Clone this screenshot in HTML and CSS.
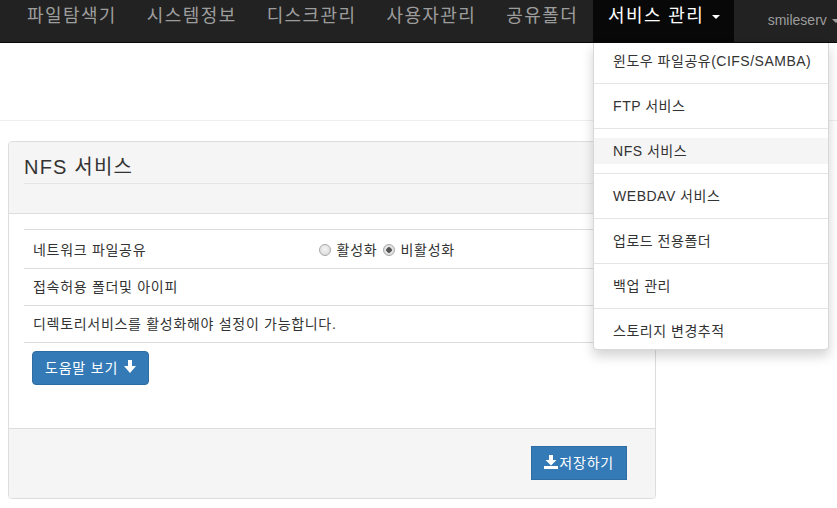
FILE: index.html
```html
<!DOCTYPE html>
<html lang="ko">
<head>
    <meta charset="UTF-8">
    <meta name="viewport" content="width=device-width, initial-scale=1.0">
    <title>NFS 서비스</title>
    <link rel="stylesheet" href="styles.css">
</head>
<body>
    <nav class="navbar">
        <ul class="nav">
            <li><a href="#">파일탐색기</a></li>
            <li><a href="#">시스템정보</a></li>
            <li><a href="#">디스크관리</a></li>
            <li><a href="#">사용자관리</a></li>
            <li><a href="#">공유폴더</a></li>
            <li class="dropdown open">
                <a href="#">서비스 관리 <span class="caret"></span></a>
                <ul class="dropdown-menu">
                    <li><a href="#">윈도우 파일공유(CIFS/SAMBA)</a></li>
                    <li class="divider"></li>
                    <li><a href="#">FTP 서비스</a></li>
                    <li class="divider"></li>
                    <li class="hover"><a href="#">NFS 서비스</a></li>
                    <li class="divider"></li>
                    <li><a href="#">WEBDAV 서비스</a></li>
                    <li class="divider"></li>
                    <li><a href="#">업로드 전용폴더</a></li>
                    <li class="divider"></li>
                    <li><a href="#">백업 관리</a></li>
                    <li class="divider"></li>
                    <li><a href="#">스토리지 변경추적</a></li>
                </ul>
            </li>
            <li class="user"><a href="#">smileserv <span class="caret"></span></a></li>
        </ul>
    </nav>

    <div class="page-top"></div>

    <div class="panel">
        <div class="panel-heading">
            <h3>NFS 서비스</h3>
        </div>
        <div class="panel-body">
            <table class="table">
                <tr class="first">
                    <td class="label-col">네트워크 파일공유</td>
                    <td>
                        <label class="radio"><input type="radio" name="nfs"> 활성화</label>
                        <label class="radio"><input type="radio" name="nfs" checked> 비활성화</label>
                    </td>
                </tr>
                <tr>
                    <td class="label-col">접속허용 폴더및 아이피</td>
                    <td></td>
                </tr>
                <tr>
                    <td colspan="2">디렉토리서비스를 활성화해야 설정이 가능합니다.</td>
                </tr>
            </table>
            <button class="btn btn-help">도움말 보기<svg class="icon" width="12" height="14" viewBox="0 0 12 14"><rect x="4" y="0" width="4" height="7" fill="#fff"/><polygon points="0,6 12,6 6,13" fill="#fff"/></svg></button>
        </div>
        <div class="panel-footer">
            <button class="btn btn-save"><svg class="icon" width="14" height="14" viewBox="0 0 14 14"><rect x="5" y="0" width="4" height="5" fill="#fff"/><polygon points="1.5,5 12.5,5 7,10.5" fill="#fff"/><rect x="0" y="11" width="14" height="3" fill="#fff"/></svg>저장하기</button>
        </div>
    </div>
</body>
</html>
```

FILE: styles.css
```css
/* General */
html {
    overflow: hidden;
}

body {
    margin: 0;
    font-family: "Liberation Sans", "Noto Sans CJK KR", sans-serif;
    font-size: 14px;
    line-height: 20px;
    letter-spacing: 0.7px;
    color: #333;
    background-color: #fff;
}

ul {
    list-style: none;
    margin: 0;
    padding: 0;
}

a {
    text-decoration: none;
}

/* Navbar */
.navbar {
    height: 42px;
    background-color: #222;
    border-bottom: 1px solid #080808;
    padding-left: 12px;
}

.nav {
    display: flex;
    height: 42px;
}

.nav > li {
    position: relative;
}

.nav > li > a {
    display: block;
    height: 42px;
    box-sizing: border-box;
    padding: 6px 15px 0;
    font-size: 18px;
    line-height: 20px;
    letter-spacing: 1.4px;
    color: #9d9d9d;
    white-space: nowrap;
}

.nav > li.open > a {
    height: 43px;
    padding-right: 14px;
    color: #fff;
    background-color: #080808;
}

.nav > li.user {
    margin-left: 19px;
}

.nav > li.user > a {
    font-size: 14px;
    letter-spacing: 0;
    padding-top: 10px;
}

.caret {
    display: inline-block;
    width: 0;
    height: 0;
    margin-left: 1px;
    vertical-align: middle;
    border-top: 4px solid;
    border-right: 4px solid transparent;
    border-left: 4px solid transparent;
}

/* Dropdown */
.dropdown-menu {
    position: absolute;
    top: 43px;
    left: 0;
    z-index: 10;
    width: 236px;
    box-sizing: border-box;
    padding: 5px 0;
    background-color: #fff;
    border: 1px solid rgba(0, 0, 0, 0.15);
    border-top: 0;
    border-radius: 0 0 4px 4px;
    box-shadow: 0 6px 12px rgba(0, 0, 0, 0.175);
}

.dropdown-menu li a {
    display: block;
    padding: 3px 19px;
    font-size: 14px;
    line-height: 20px;
    letter-spacing: 0.5px;
    color: #333;
    white-space: nowrap;
}

.dropdown-menu li.hover a {
    background-color: #f5f5f5;
}

.dropdown-menu .divider {
    height: 1px;
    margin: 9px 0;
    background-color: #e5e5e5;
}

/* Page */
.page-top {
    height: 77px;
    border-bottom: 1px solid #eee;
}

.panel {
    width: 648px;
    box-sizing: border-box;
    margin: 20px 0 0 8px;
    border: 1px solid #ddd;
    border-radius: 4px;
    box-shadow: 0 1px 1px rgba(0, 0, 0, 0.05);
    overflow: hidden;
}

.panel-heading {
    padding: 14px 15px 29px;
    background-color: #f5f5f5;
    border-bottom: 1px solid #ddd;
}

.panel-heading h3 {
    margin: 0;
    padding-bottom: 5px;
    font-size: 20px;
    font-weight: normal;
    line-height: 22px;
    letter-spacing: 1.2px;
    border-bottom: 1px solid #e5e5e5;
}

.panel-body {
    padding: 15px 15px 43px;
}

.table {
    width: 100%;
    border-collapse: collapse;
    border-bottom: 1px solid #ddd;
}

.table td {
    padding: 8px 9px;
    border-top: 1px solid #ddd;
    vertical-align: middle;
    height: 20px;
}

.table tr.first td {
    height: 22px;
    padding-top: 9px;
    padding-bottom: 7px;
}

.table .label-col {
    width: 268px;
}

.radio {
    margin-right: 1px;
}

.radio input {
    appearance: none;
    -webkit-appearance: none;
    width: 12px;
    height: 12px;
    margin: 0 1px 0 0;
    vertical-align: -1px;
    border: 1px solid #a9a9a9;
    border-radius: 50%;
    background: radial-gradient(circle at 50% 40%, #f4f4f4, #d6d6d6);
}

.radio input:checked {
    background: radial-gradient(circle, #555 0, #555 2.5px, #e6e6e6 3px, #d6d6d6 100%);
}

/* Buttons */
.btn {
    display: inline-block;
    height: 34px;
    padding: 6px 12px;
    font-family: inherit;
    font-size: 14px;
    line-height: 20px;
    letter-spacing: 0.8px;
    color: #fff;
    background-color: #337ab7;
    border: 1px solid #2e6da4;
    cursor: pointer;
}

.btn-help {
    margin: 8px 0 0 8px;
    border-radius: 4px;
}

.btn-help .icon {
    margin-left: 6px;
}

.btn-save {
    border-radius: 0;
}

.btn .icon {
    vertical-align: -1px;
}

.btn-save .icon {
    margin-right: 1px;
}

.panel-footer {
    display: flex;
    justify-content: flex-end;
    padding: 17px 28px 18px;
    background-color: #f5f5f5;
    border-top: 1px solid #ddd;
}
```
